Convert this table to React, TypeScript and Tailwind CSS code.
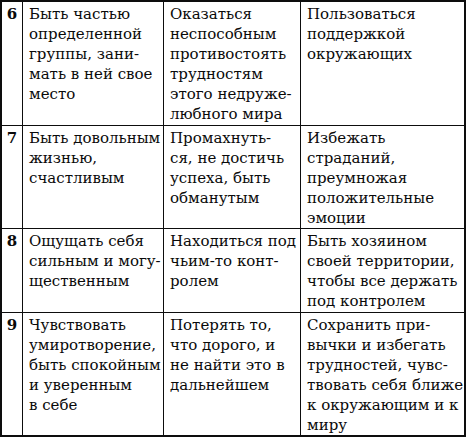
const rows = [
  {
    n: "6",
    h: "h-[124px]",
    cells: [
      ["Быть частью", "определенной", "группы, зани-", "мать в ней свое", "место"],
      ["Оказаться", "неспособным", "противостоять", "трудностям", "этого недруже-", "любного мира"],
      ["Пользоваться", "поддержкой", "окружающих"],
    ],
  },
  {
    n: "7",
    h: "h-[103px]",
    cells: [
      ["Быть довольным", "жизнью,", "счастливым"],
      ["Промахнуть-", "ся, не достичь", "успеха, быть", "обманутым"],
      ["Избежать", "страданий,", "преумножая", "положительные", "эмоции"],
    ],
  },
  {
    n: "8",
    h: "h-[84px]",
    cells: [
      ["Ощущать себя", "сильным и могу-", "щественным"],
      ["Находиться под", "чьим-то конт-", "ролем"],
      ["Быть хозяином", "своей территории,", "чтобы все держать", "под контролем"],
    ],
  },
  {
    n: "9",
    h: "h-[122px]",
    cells: [
      ["Чувствовать", "умиротворение,", "быть спокойным", "и уверенным", "в себе"],
      ["Потерять то,", "что дорого, и", "не найти это в", "дальнейшем"],
      ["Сохранить при-", "вычки и избегать", "трудностей, чувс-", "твовать себя ближе", "к окружающим и к", "миру"],
    ],
  },
];

export default function App() {
  return (
    <div className="h-[438px] w-[466px] bg-white">
      <div className="w-[466px] border-2 border-[#0d0d0d] font-['DejaVu_Serif',serif] text-[15px] leading-[20px] text-[#0a0a0a]">
        {rows.map((row, i) => (
          <div
            key={row.n}
            className={`grid grid-cols-[21px_141px_137px_1fr] ${row.h} ${
              i < rows.length - 1 ? "border-b-[1.5px] border-[#0d0d0d]" : ""
            }`}
          >
            <div className="border-r-[1.5px] border-[#0d0d0d] pt-[2px] text-center font-bold">
              {row.n}
            </div>
            {row.cells.map((lines, j) => (
              <div
                key={j}
                className={`whitespace-nowrap pl-[6px] pt-[2px] ${
                  j < 2 ? "border-r-[1.5px] border-[#0d0d0d]" : ""
                }`}
              >
                {lines.map((l) => (
                  <div key={l}>{l}</div>
                ))}
              </div>
            ))}
          </div>
        ))}
      </div>
    </div>
  );
}
